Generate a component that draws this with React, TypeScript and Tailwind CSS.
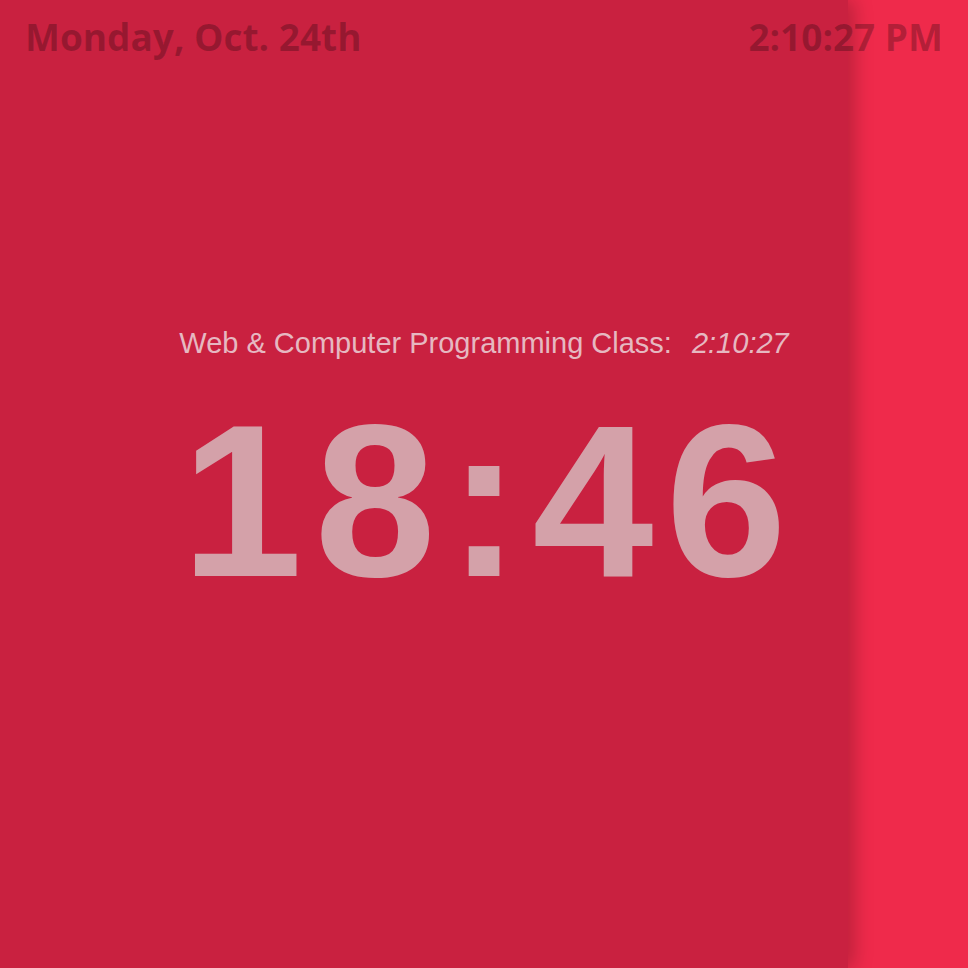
import React from "react";

export default function App() {
  return (
    <div className="grid h-[968px] w-[968px] overflow-hidden bg-[#ef2a4b]">
      <div className="[grid-area:1/1] h-full w-[848px] bg-[#c92140] shadow-[6px_0_18px_rgba(0,0,0,0.22)]" />
      <div className="[grid-area:1/1] flex h-full w-full flex-col">
        <header
          className="flex h-[53px] items-start justify-between px-[25px] pt-[18px] text-[37px] font-bold leading-none text-black/25"
          style={{ fontFamily: '"Open Sans", "Noto Sans", sans-serif' }}
        >
          <span>Monday, Oct. 24th</span>
          <span>2:10:27 PM</span>
        </header>
        <main
          className="flex flex-col items-center pt-[276px]"
          style={{ fontFamily: '"Liberation Sans", Arial, sans-serif' }}
        >
          <div className="flex items-baseline gap-[20px] text-[29px] leading-none text-[#e6b8c1]">
            <span>Web &amp; Computer Programming Class:</span>
            <span className="italic">2:10:27</span>
          </div>
          <div className="mt-[34px] mr-[-12px] text-[218px] font-bold leading-none tracking-[12px] text-[#d4a1a9]">
            18:46
          </div>
        </main>
      </div>
    </div>
  );
}
